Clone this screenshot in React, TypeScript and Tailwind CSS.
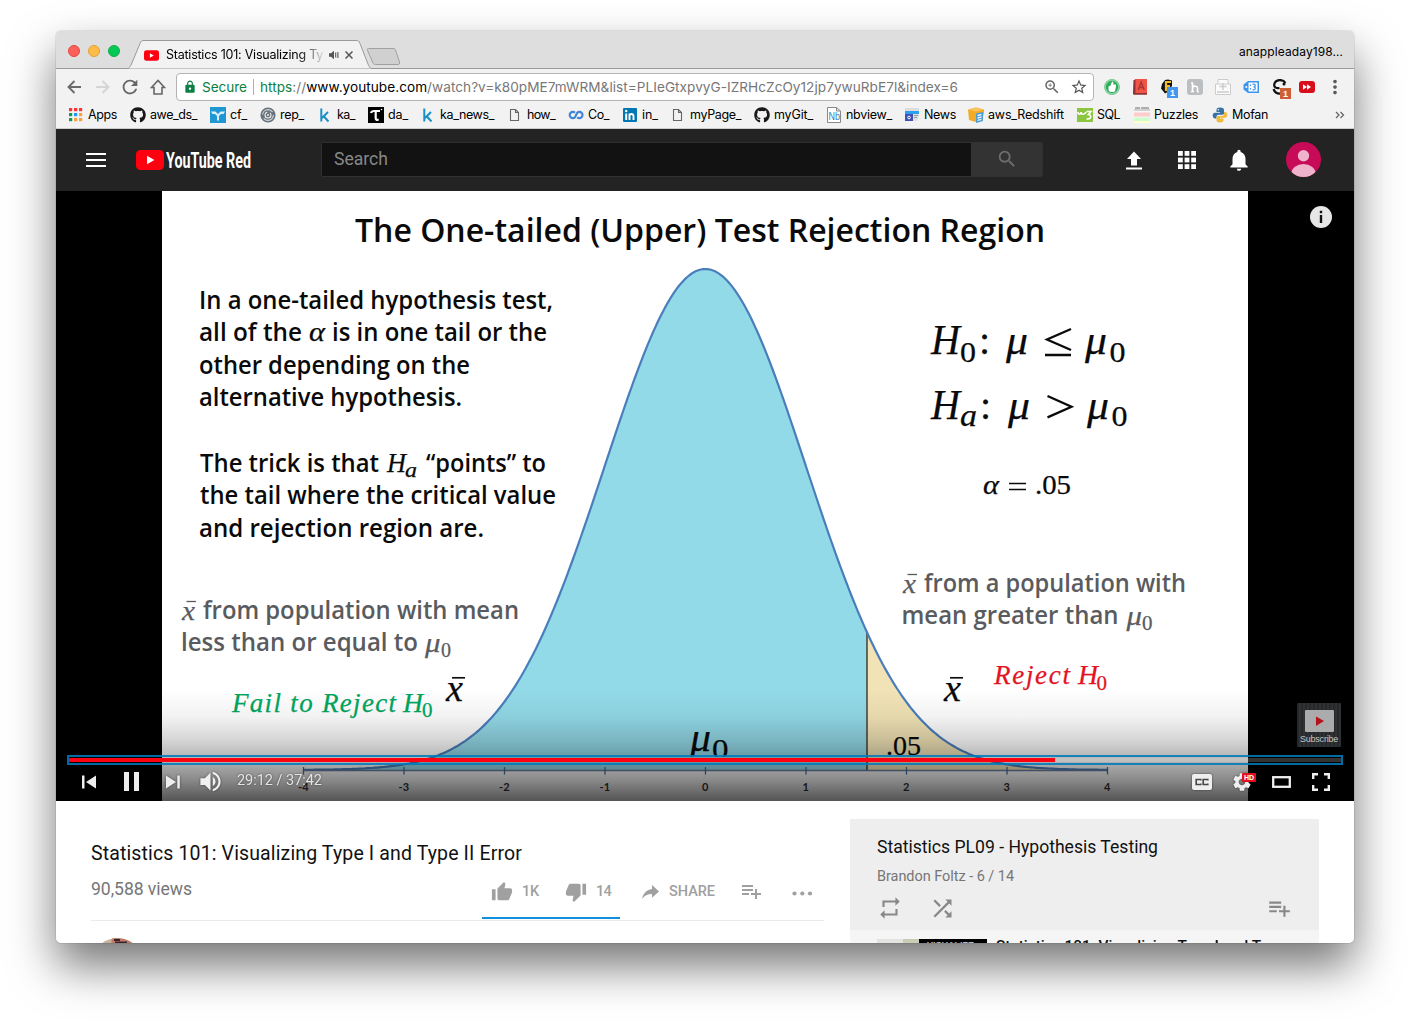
import React, { useLayoutEffect, useRef, useState } from 'react';
import {
  MdNotifications,
  MdSearch,
  MdThumbUp,
  MdThumbDown,
  MdPlaylistAdd,
  MdRepeat,
  MdShuffle,
  MdZoomIn,
  MdStarBorder,
  MdVolumeUp,
  MdSettings,
  MdLock,
  MdRefresh,
  MdMoreVert,
} from 'react-icons/md';
import { FaGithub } from 'react-icons/fa';

/* Text whose tracking is adjusted so that it fills a given width. */
function Fit({ w, className = '', children }: { w: number; className?: string; children: React.ReactNode }) {
  const ref = useRef<HTMLSpanElement>(null);
  const [ls, setLs] = useState(0);
  useLayoutEffect(() => {
    const el = ref.current;
    if (!el) return;
    const natural = el.getBoundingClientRect().width;
    const n = (el.textContent || ' ').length;
    setLs((w - natural) / n);
  }, [w]);
  return (
    <span ref={ref} className={`inline-block whitespace-nowrap ${className}`} style={{ letterSpacing: `${ls}px` }}>
      {children}
    </span>
  );
}

function PlayBadge({ className }: { className: string }) {
  return (
    <svg viewBox="0 0 28 20" className={className}>
      <rect width="28" height="20" rx="4.5" fill="#ff0010" />
      <path d="M11 5.7v8.6l7.4-4.3z" fill="#fff" />
    </svg>
  );
}

function TabStrip() {
  return (
    <div className="relative flex h-[38px] bg-[#dedede]">
      <div className="flex w-[72px] items-center gap-2 pl-3 pt-[2px]">
        <i className="size-3 rounded-full border border-[#e2463f] bg-[#fc605b]" />
        <i className="size-3 rounded-full border border-[#e1a22f] bg-[#fdbc4a]" />
        <i className="size-3 rounded-full border border-[#12ad45] bg-[#06c857]" />
      </div>
      <div className="relative w-[244px]">
        <svg viewBox="0 0 244 38" className="absolute inset-0 h-[38px] w-[244px]">
          <path d="M0 38C2 36 2.500 35 3.500 33L12 12.500C13 10 14 9.500 16 9.500H228C230 9.500 231 10 232 12.500L240 33C241 35.500 242 37 244 38z" fill="#f2f2f2" stroke="#999" />
        </svg>
        <div className="relative z-10 flex h-full items-center pt-[10px] pl-4">
          <PlayBadge className="mr-[7px] h-[11px] w-[15px]" />
          <Fit w={157} className="bg-linear-to-r from-black from-82% to-[#ddd] bg-clip-text font-['Inter'] text-[12.500px] text-transparent">
            Statistics 101: Visualizing Ty
          </Fit>
          <svg viewBox="0 0 10 10" className="ml-[6px] h-[10px] w-[10px]">
            <path d="M0 3.300h2L5 .8v8.400L2 6.700H0z" fill="#555" />
            <path d="M6.700 2.500v5M8.900 2v6" stroke="#555" strokeWidth="1.100" />
          </svg>
          <svg viewBox="0 0 8 8" className="ml-[6px] h-2 w-2">
            <path d="M.5.500l7 7M7.500.500l-7 7" stroke="#555" strokeWidth="1.500" />
          </svg>
        </div>
      </div>
      <svg viewBox="0 0 36 38" className="-ml-[6px] h-[38px] w-9">
        <path d="M2.500 17.500H27C28.500 17.500 29 18 29.500 19l4 12c.5 1.500 0 2.500-1.500 2.500H9.500C8 33.500 7.500 33 7 32L1.500 19.500c-.5-1.500 0-2 1-2z" fill="#d0d0d0" stroke="#a0a0a0" />
      </svg>
      <div className="flex flex-1 items-center justify-end pr-[11px] pt-[3px]">
        <Fit w={104} className="font-['Inter'] text-[12px] text-black">anappleaday198…</Fit>
      </div>
      <div className="absolute bottom-0 left-0 h-px w-[72px] bg-[#999]" />
      <div className="absolute bottom-0 left-[316px] right-0 h-px bg-[#999]" />
    </div>
  );
}

function Extensions() {
  return (
    <div className="ml-[10px] flex flex-1 items-center">
      <svg viewBox="0 0 16 16" className="mr-3 size-4">
        <circle cx="8" cy="8" r="7.700" fill="#2eab5b" />
        <circle cx="8" cy="8" r="6.900" fill="none" stroke="#8bd3a3" strokeWidth="1.500" />
        <path d="M4.500 7.500l2-1 1.500-4c1.500 0 1.600 1 1.200 3H12v2L11 12c-.5 1-1.500 1.200-3.500 1-2 0-3-1-3-2.500z" fill="#fff" />
      </svg>
      <svg viewBox="0 0 16 16" className="mr-3 size-4">
        <path d="M2 1.500L3 0h12v14.500H3L1.500 15z" fill="#ef5446" />
        <path d="M1.500 1h2v13h11.500v1.700H2C1 15.500 1 15 1 14z" fill="#8f3336" />
        <path d="M6.300 11L9.200 3l3 8M7.300 8.500h4" fill="none" stroke="#a83535" strokeWidth="1.400" />
      </svg>
      <svg viewBox="0 0 18 19" className="mr-[9px] mt-[3px] h-[19px] w-[18px]">
        <path d="M2 5l3-4 3-.5 4 1v5l-2 5-5 3-4-5z" fill="#111" />
        <path d="M6 12V3h5M6 7h4" fill="none" stroke="#f2bd2c" strokeWidth="2.200" />
        <rect x="7" y="8" width="11" height="11" fill="#4296ef" />
        <text x="12.500" y="17" textAnchor="middle" className="font-['Liberation_Sans'] text-[9px] font-bold" fill="#fff">1</text>
      </svg>
      <svg viewBox="0 0 16 16" className="mr-3 size-4">
        <rect width="16" height="16" rx="3" fill="#bcbfc1" />
        <path d="M5.500 13V3.500M4 12.500h3M4 4h1.500M5.500 8.200c1.500-1.500 5-1.500 5 .8v2.500c0 1 .4 1.500 1.300 1.200" fill="none" stroke="#fff" strokeWidth="1.600" />
      </svg>
      <svg viewBox="0 0 16 16" className="mr-3 size-4">
        <path d="M3 5V.5h10V5M.5 5h15v10.500H.500z" fill="#fbfbfb" stroke="#ccc" />
        <path d="M8 4v7M4.500 7.500h7M2 13h12" stroke="#ccc" strokeWidth="1.500" />
      </svg>
      <svg viewBox="0 0 16 16" className="mr-[13px] size-4">
        <path d="M5 2h11v12H5L.5 10.500v-5z" fill="#3c96ee" />
        <rect x="5.500" y="3.500" width="9" height="9" fill="#fff" />
        <path d="M7.500 5.500v1.500M7.500 9v1.500M9.500 5.200h1c2.500 0 2.500 2.600 0 2.700 2.500 0 2.500 2.900 0 2.900h-1" stroke="#3c96ee" strokeWidth="1.200" fill="none" />
        <circle cx="3.300" cy="8" r="1" fill="#fff" />
      </svg>
      <svg viewBox="0 0 19 20" className="mr-[8px] mt-[4px] h-5 w-[19px]">
        <path d="M13.500 4C11 0 4 0 2.500 4.500s3 5 5 4.500M1.500 10C3 14 6 15 9 14.500" fill="none" stroke="#111" strokeWidth="2.200" />
        <circle cx="12" cy="5" r="1.500" fill="#111" />
        <rect x="8" y="9" width="11" height="11" fill="#cc5f36" />
        <text x="13.500" y="18" textAnchor="middle" className="font-['Liberation_Sans'] text-[9px] font-bold" fill="#fff">1</text>
      </svg>
      <svg viewBox="0 0 16 14" className="h-[14px] w-4">
        <rect y="1" width="16" height="12" rx="3" fill="#d80f1b" />
        <path d="M4 4.300v5.400L8 7zM8 4.300v5.400L12 7z" fill="#fff" />
      </svg>
      <MdMoreVert className="ml-[9px] size-[22px] text-[#5a5a5a]" />
    </div>
  );
}

function Toolbar() {
  return (
    <div className="flex h-9 items-center bg-[#f2f2f2] pl-[11px]">
      <svg viewBox="0 0 14 14" className="size-[14px]"><path d="M14 7H1.500M7.500 1L1.500 7l6 6" fill="none" stroke="#6b6b6b" strokeWidth="1.900" /></svg>
      <svg viewBox="0 0 14 14" className="ml-[15px] size-[14px]"><path d="M0 7h12.500M6.500 1l6 6-6 6" fill="none" stroke="#d5d5d5" strokeWidth="1.900" /></svg>
      <MdRefresh className="ml-[9px] size-[22px] text-[#666]" />
      <svg viewBox="0 0 16 16" className="ml-[9px] size-4"><path d="M1.500 8.500L8 1.500l6.500 7H12V15H9.500H6.500H4V8.500z" fill="none" stroke="#666" strokeWidth="1.600" /></svg>
      <div className="ml-[10px] flex h-7 w-[918px] shrink-0 items-center rounded-[4px] border border-[#b4b4b4] bg-white pl-[6px]">
        <MdLock className="size-[14px] text-[#0b8043]" />
        <div className="-mt-[2px] ml-[5px] w-[51px] text-[#0b8043]">
          <Fit w={45} className="font-['Inter'] text-[13.600px]">Secure</Fit>
        </div>
        <div className="h-4 w-px bg-[#b0b0b0]" />
        <div className="-mt-[2px] ml-[6px] w-[783px]">
          <Fit w={698} className="font-['Inter'] text-[13.600px] text-[#777]">
            <span className="text-[#0b8043]">https</span>://<span className="text-black">www.youtube.com</span>/watch?v=k80pME7mWRM&amp;list=PLIeGtxpvyG-IZRHcZcOy12jp7ywuRbE7l&amp;index=6
          </Fit>
        </div>
        <MdZoomIn className="size-[18px] text-[#666]" />
        <MdStarBorder className="ml-[9px] size-[18px] text-[#555]" />
      </div>
      <Extensions />
    </div>
  );
}

const kGlyph = (
  <svg viewBox="0 0 16 16" className="size-4"><path d="M4.300 1.500v13M11 5L5 11M6.500 9l5 5.500" fill="none" stroke="#1b90c4" strokeWidth="2" /></svg>
);
const fileGlyph = (
  <svg viewBox="0 0 16 16" className="size-4"><path d="M3.500 2.500h5l3 3v8h-8zM8.500 2.500v3h3" fill="none" stroke="#666" strokeWidth="1.100" /></svg>
);
const dots = ['#f33', '#f33', '#f33', '#0a9d58', '#2196f3', '#f9a03a', '#0a9d58', '#f9a03a', '#f9a03a'];

const bookmarks: { cell: string; w: number; label: string; icon: React.ReactNode }[] = [
  {
    cell: 'w-[62px]', w: 29, label: 'Apps',
    icon: <svg viewBox="0 0 16 16" className="size-4">{dots.map((c, i) => <rect key={i} x={1 + (i % 3) * 5} y={1 + Math.floor(i / 3) * 5} width="3.200" height="3.200" fill={c} />)}</svg>,
  },
  { cell: 'w-[80px]', w: 47, label: 'awe_ds_', icon: <FaGithub className="size-4 text-[#191717]" /> },
  {
    cell: 'w-[50px]', w: 17, label: 'cf_',
    icon: <svg viewBox="0 0 16 16" className="size-4"><rect width="16" height="16" fill="#1f97d5" /><path d="M1 4.500h4.500L8 7l2.500-2.500H15L13.500 7H11L9 9v4.500H7V9L5 7H2.500z" fill="#d9f0fb" /></svg>,
  },
  {
    cell: 'w-[57px]', w: 24, label: 'rep_',
    icon: <svg viewBox="0 0 16 16" className="size-4"><circle cx="8" cy="8" r="7.600" fill="#68747d" /><circle cx="8" cy="8" r="5.400" fill="none" stroke="#d5dade" strokeWidth="1.100" strokeDasharray="13 4" /><circle cx="8" cy="8" r="3" fill="none" stroke="#eee" strokeWidth="1.100" strokeDasharray="13 3" /><circle cx="8" cy="8" r="1" fill="#eee" /></svg>,
  },
  { cell: 'w-[51px]', w: 18, label: 'ka_', icon: kGlyph },
  {
    cell: 'w-[52px]', w: 20, label: 'da_',
    icon: <svg viewBox="0 0 16 16" className="size-4"><rect width="16" height="16" /><path d="M3 6c.5-1.500 1.300-2 3-2h6M7.700 4v7c0 1.800 1 2.200 3 1.500" fill="none" stroke="#fff" strokeWidth="2.200" /><circle cx="13.500" cy="2.500" r=".8" fill="#fff" /></svg>,
  },
  { cell: 'w-[87px]', w: 54, label: 'ka_news_', icon: kGlyph },
  { cell: 'w-[61px]', w: 28, label: 'how_', icon: fileGlyph },
  {
    cell: 'w-[54px]', w: 21, label: 'Co_',
    icon: <svg viewBox="0 0 16 16" className="size-4"><path d="M7 5.800A3.100 3.100 0 1 0 7 10.200L9.200 5.800A3.100 3.100 0 1 1 9.200 10.200" fill="none" stroke="#3f86d8" strokeWidth="2.200" /></svg>,
  },
  {
    cell: 'w-[48px]', w: 16, label: 'in_',
    icon: <svg viewBox="0 0 16 16" className="size-4"><rect x="1" y="1" width="14" height="14" rx="1" fill="#0077b5" /><path d="M4.200 6.500V13M7.500 13V6.500M7.500 9c0-2.500 4-2.700 4 0v4" fill="none" stroke="#fff" strokeWidth="1.900" /><circle cx="4.200" cy="4" r="1.200" fill="#fff" /></svg>,
  },
  { cell: 'w-[84px]', w: 51, label: 'myPage_', icon: fileGlyph },
  { cell: 'w-[72px]', w: 39, label: 'myGit_', icon: <FaGithub className="size-4 text-[#191717]" /> },
  {
    cell: 'w-[78px]', w: 46, label: 'nbview_',
    icon: (
      <svg viewBox="0 0 16 16" className="size-4">
        <path d="M1.500.5h9l4 3.500v11.500h-13zM10.500.5V4h4" fill="#fff" stroke="#888" />
        <text x="2.500" y="13" textLength="11.500" lengthAdjust="spacingAndGlyphs" fill="#3b7fb5" className="font-['Liberation_Sans'] text-[10px]">Nb</text>
      </svg>
    ),
  },
  {
    cell: 'w-[64px]', w: 32, label: 'News',
    icon: <svg viewBox="0 0 16 16" className="size-4"><path d="M1 1h14v4H1z" fill="#dcdcdc" /><path d="M1 4h14v3H1z" fill="#2b9ff0" /><path d="M1 7h8v7H1z" fill="#3f51b5" /><path d="M9 7h6v3l-2 4H9z" fill="#e0e0e0" /><path d="M10 8.500h4M10 10.500h3" stroke="#999" /><circle cx="5" cy="10.500" r="1.300" fill="none" stroke="#fff" /></svg>,
  },
  {
    cell: 'w-[109px]', w: 76, label: 'aws_Redshift',
    icon: <svg viewBox="0 0 16 16" className="size-4"><path d="M0 2.500L8 .5l8 2V6L14 14l-6 1-7-2z" fill="#f2ab27" /><path d="M0 2.500l8 2 8-2L8 .5z" fill="#f8c45c" /><path d="M8 6.500l7-1.500v9l-7 2z" fill="#4b9bd1" /><path d="M9.500 8.500l4-1M9.500 11l4-1M9.500 13.300l4-1" stroke="#e6f3fb" strokeWidth="1.300" /></svg>,
  },
  {
    cell: 'w-[57px]', w: 23, label: 'SQL',
    icon: <svg viewBox="0 0 16 16" className="size-4"><rect y="1" width="16" height="14" fill="#8cc640" /><path d="M1 5c0 3 3 3 3 0 0 3 4 3 5 0M9.500 4.500H14l-2.500 3c3 0 3 4.500-.5 4.500H9.500" fill="none" stroke="#fff" strokeWidth="1.600" /></svg>,
  },
  {
    cell: 'w-[78px]', w: 44, label: 'Puzzles',
    icon: <svg viewBox="0 0 16 16" className="size-4"><rect width="16" height="16" fill="#f7f7f7" /><path d="M1 1h5M7 1h8" stroke="#666" strokeWidth="1.200" /><path d="M0 3h16" stroke="#aaa" /><rect y="5.500" width="16" height="4" fill="#fcc" /><rect y="10.500" width="16" height="3.500" fill="#cfc" /><rect y="14" width="16" height="2" fill="#ffc" /></svg>,
  },
  {
    cell: 'w-[60px]', w: 36, label: 'Mofan',
    icon: <svg viewBox="0 0 16 16" className="size-4"><path d="M8 .5c-3 0-3.500 1-3.500 2.500V5H8v.7H3C1.300 5.700.7 7 .7 8.500S1.500 11.500 3 11.500h1.500V9.800c0-1.300 1-2 2-2h4c1 0 1.500-.8 1.500-1.500V3C12 1.200 10.500.5 8 .5z" fill="#3672a5" /><path d="M8 15.500c3 0 3.500-1 3.500-2.500v-1.500H8v-.7h5c1.500 0 2.300-1.300 2.300-3S14.500 5 13 5h-1v2c0 1.300-1 2-2 2H6.500C5 9 4.500 9.800 4.500 10.500V13c0 1.800 1 2.500 3.500 2.500z" fill="#f0bb3a" /><circle cx="6.300" cy="2.700" r=".7" fill="#fff" /></svg>,
  },
];

function BookmarksBar() {
  return (
    <div className="flex h-6 items-center border-b border-[#c9cdce] bg-[#f2f2f2] pb-1 pl-3 pr-[9px]">
      {bookmarks.map((b) => (
        <div key={b.label} className={`flex shrink-0 items-center gap-1 ${b.cell}`}>
          {b.icon}
          <Fit w={b.w} className="font-['Inter'] text-[12.500px] leading-4 text-black">{b.label}</Fit>
        </div>
      ))}
      <svg viewBox="0 0 10 8" className="ml-auto h-2 w-[10px]"><path d="M1 1l3 3-3 3M5.500 1l3 3-3 3" fill="none" stroke="#666" strokeWidth="1.300" /></svg>
    </div>
  );
}

function Masthead() {
  return (
    <div className="flex h-[62px] items-center bg-[#232323] pl-[30px]">
      <div className="flex w-[20px] flex-col gap-[4px]">
        <i className="h-[2px] bg-white" />
        <i className="h-[2px] bg-white" />
        <i className="h-[2px] bg-white" />
      </div>
      <PlayBadge className="ml-[30px] h-5 w-7" />
      <svg viewBox="0 0 90 30" className="ml-[2px] h-[30px] w-[90px]">
        <text x="0" y="22.800" textLength="85" lengthAdjust="spacingAndGlyphs" fill="#fff" className="font-['Roboto'] text-[22px] font-bold">YouTube Red</text>
      </svg>
      <div className="-mt-[2px] ml-[65px] flex h-[35px] w-[722px] rounded-[2px] border border-[#303030]">
        <div className="flex w-[649px] items-center bg-[#121212] pl-3">
          <Fit w={54} className="font-['Roboto'] text-[17.600px] text-[#888]">Search</Fit>
        </div>
        <div className="flex flex-1 items-center justify-center bg-[#333]">
          <MdSearch className="size-[22px] text-[#6e6e6e]" />
        </div>
      </div>
      <svg viewBox="0 0 16 18" className="ml-[83px] h-[19px] w-4"><path d="M8 0l7 7.500h-4V14H5V7.500H1zM0 16h16v2H0z" fill="#fff" /></svg>
      <svg viewBox="0 0 18 18" className="ml-9 size-[18px]">
        {[0, 1, 2].map((r) => [0, 1, 2].map((c) => <rect key={`${r}${c}`} x={c * 6.600} y={r * 6.600} width="4.800" height="4.800" fill="#fff" />))}
      </svg>
      <MdNotifications className="ml-[30px] size-[26px] text-white" />
      <svg viewBox="0 0 35 35" className="-mt-px ml-[34px] size-[35px]">
        <clipPath id="avatar"><circle cx="17.500" cy="17.500" r="17.500" /></clipPath>
        <g clipPath="url(#avatar)">
          <rect width="35" height="35" fill="#c80b58" />
          <circle cx="17.500" cy="13.700" r="5.700" fill="#efb3cb" />
          <ellipse cx="17.500" cy="31" rx="12" ry="9" fill="#efb3cb" />
        </g>
      </svg>
    </div>
  );
}

/* Normal curve: z = 0 at x 705, one unit is 100.6 px, axis at y 770. */
const curveY = (x: number) => 770 - 501 * Math.exp(-0.5 * ((x - 705.3) / 100.6) ** 2);
const points = (from: number, to: number) => {
  const out: string[] = [];
  for (let x = from; x <= to; x += 2) out.push(`${x},${curveY(x).toFixed(1)}`);
  return out.join(' ');
};

type TextProps = { x: number; y: number; w?: number; s: number; f?: string; spread?: boolean; children: string };
const Sans = ({ x, y, w, s, f = '#0a0a0a', children }: TextProps) => (
  <text x={x} y={y} textLength={w} lengthAdjust="spacingAndGlyphs" fontSize={s} fill={f} className="font-['Open_Sans'] font-semibold">{children}</text>
);
const MathText = ({ x, y, w, s, f = '#0a0a0a', spread, children }: TextProps) => (
  <text x={x} y={y} textLength={w} lengthAdjust={spread ? 'spacing' : 'spacingAndGlyphs'} fontSize={s} fill={f} stroke={f} strokeWidth="0.25" className="font-['Liberation_Serif'] italic">{children}</text>
);
const Num = ({ x, y, w, s, f = '#0a0a0a', children }: TextProps) => (
  <text x={x} y={y} textLength={w} lengthAdjust="spacingAndGlyphs" fontSize={s} fill={f} stroke={f} strokeWidth="0.25" className="font-['Liberation_Serif']">{children}</text>
);
const gray = '#595b5e';

function Slide() {
  return (
    <svg viewBox="162 191 1086 610" className="h-[610px] w-[1086px] bg-white">
      <polygon points={`303,770 ${points(303, 867)} 867,770`} fill="#93dae8" />
      <polygon points={`867,770 ${points(867, 1107)} 1107,770`} fill="#f1e3b6" />
      <path d="M867 632V770" stroke="#4a4a3c" strokeWidth="1.600" />
      <polyline points={points(303, 1107)} fill="none" stroke="#4a7ebb" strokeWidth="2.200" />
      <path d="M303 770.500H1108" stroke="#6a7fa0" strokeWidth="1.400" />
      {[-4, -3, -2, -1, 0, 1, 2, 3, 4].map((n) => (
        <g key={n}>
          <path d={`M${705.500 + n * 100.500} 767v7.500`} stroke="#4a6c9c" strokeWidth="1.300" />
          <text x={705.300 + n * 100.500} y="791" textAnchor="middle" fontSize="11" fill="#333" className="font-['Lato'] font-bold">{n}</text>
        </g>
      ))}

      <Sans x={355} y={242} w={690} s={33}>The One-tailed (Upper) Test Rejection Region</Sans>
      <Sans x={199} y={308.500} w={354} s={25}>In a one-tailed hypothesis test,</Sans>
      <Sans x={199} y={341} w={103} s={25}>all of the</Sans>
      <MathText x={309} y={341} w={16} s={27}>α</MathText>
      <Sans x={332} y={341} w={215} s={25}>is in one tail or the</Sans>
      <Sans x={199} y={373.500} w={271} s={25}>other depending on the</Sans>
      <Sans x={199} y={406} w={263} s={25}>alternative hypothesis.</Sans>
      <Sans x={200} y={471.500} w={179} s={25}>The trick is that</Sans>
      <MathText x={387} y={471.500} w={19} s={28}>H</MathText>
      <MathText x={405} y={477} w={12} s={22}>a</MathText>
      <Sans x={426} y={471.500} w={120} s={25}>“points” to</Sans>
      <Sans x={200} y={504} w={356} s={25}>the tail where the critical value</Sans>
      <Sans x={199} y={536.500} w={285} s={25}>and rejection region are.</Sans>

      <MathText x={182} y={619.500} w={13} s={27} f={gray}>x</MathText>
      <path d="M186.500 601.500h9.500" stroke={gray} strokeWidth="1.300" />
      <Sans x={203} y={619} w={316} s={25} f={gray}>from population with mean</Sans>
      <Sans x={181} y={651} w={237} s={25} f={gray}>less than or equal to</Sans>
      <MathText x={425} y={651.500} w={15.500} s={27} f={gray}>μ</MathText>
      <Num x={441} y={657} w={10} s={20.500} f={gray}>0</Num>

      <MathText x={232} y={711.500} w={164} s={27} spread f="#00a65e">Fail to Reject</MathText>
      <MathText x={403} y={711.500} w={20} s={28} f="#00a65e">H</MathText>
      <Num x={422} y={717} w={10.500} s={21.500} f="#00a65e">0</Num>
      <MathText x={446} y={700.500} w={17} s={37}>x</MathText>
      <path d="M452 677.800h13" stroke="#111" strokeWidth="1.700" />

      <g clipPath="url(#aboveBar)">
        <clipPath id="aboveBar"><rect x="600" y="600" width="400" height="157" /></clipPath>
        <MathText x={690} y={750.500} w={21} s={42}>μ</MathText>
        <Num x={712} y={759} w={16.500} s={30}>0</Num>
        <Num x={886} y={754.500} w={35} s={27}>.05</Num>
      </g>

      <MathText x={931} y={354} w={29} s={43}>H</MathText>
      <Num x={960} y={362} w={16} s={30}>0</Num>
      <Num x={979} y={354} s={40}>:</Num>
      <MathText x={1006} y={354} w={22} s={43}>μ</MathText>
      <path d="M1071 329l-24 10.500 24 10.500M1045 355h26" fill="none" stroke="#0a0a0a" strokeWidth="2.300" />
      <MathText x={1085} y={354} w={22} s={43}>μ</MathText>
      <Num x={1109.500} y={362} w={16} s={30}>0</Num>

      <MathText x={931} y={418.500} w={29} s={43}>H</MathText>
      <MathText x={960} y={426} w={17} s={32}>a</MathText>
      <Num x={980} y={418.500} s={40}>:</Num>
      <MathText x={1008} y={418.500} w={22} s={43}>μ</MathText>
      <path d="M1047.500 396l24 10.700-24 10.700" fill="none" stroke="#0a0a0a" strokeWidth="2.300" />
      <MathText x={1087} y={418.500} w={22} s={43}>μ</MathText>
      <Num x={1111.500} y={426} w={16} s={30}>0</Num>

      <MathText x={983} y={494} w={16} s={28}>α</MathText>
      <path d="M1009 483.500h17M1009 489.500h17" stroke="#0a0a0a" strokeWidth="1.700" />
      <Num x={1035} y={494} w={36} s={27}>.05</Num>

      <MathText x={903} y={592.500} w={13} s={27} f={gray}>x</MathText>
      <path d="M907.500 574.500h9.500" stroke={gray} strokeWidth="1.300" />
      <Sans x={924} y={592} w={262} s={25} f={gray}>from a population with</Sans>
      <Sans x={901.500} y={624} w={217} s={25} f={gray}>mean greater than</Sans>
      <MathText x={1126.500} y={624.500} w={15.500} s={27} f={gray}>μ</MathText>
      <Num x={1142} y={630} w={10.500} s={20.500} f={gray}>0</Num>
      <MathText x={944} y={700.500} w={17} s={37}>x</MathText>
      <path d="M950 677.800h13" stroke="#111" strokeWidth="1.700" />
      <MathText x={994} y={684} w={76} s={27} spread f="#e3141f">Reject</MathText>
      <MathText x={1078} y={684} w={20} s={28} f="#e3141f">H</MathText>
      <Num x={1096.500} y={689.500} w={10.500} s={21.500} f="#e3141f">0</Num>
    </svg>
  );
}

function Player() {
  return (
    <div className="relative flex h-[610px] justify-center bg-black">
      <Slide />
      <div className="absolute inset-x-0 bottom-0 flex h-[112px] flex-col bg-[linear-gradient(to_bottom,rgba(0,0,0,0)_0%,rgba(0,0,0,0.05)_25%,rgba(0,0,0,0.16)_45%,rgba(0,0,0,0.31)_64%,rgba(0,0,0,0.46)_81%,rgba(0,0,0,0.67)_100%)] px-[11px] pt-[66px]">
        <div className="flex h-[10px] items-center border-2 border-[rgba(0,122,190,0.87)]">
          <div className="h-[4px] w-[986px] bg-[#ff0012]" />
          <div className="h-[4px] w-[43px] bg-[#c4c4c4]/80" />
          <div className="h-[4px] flex-1 bg-white/20" />
        </div>
        <div className="flex h-[33px] items-center pl-[15px] drop-shadow-[0_0_1px_rgba(0,0,0,0.5)]">
          <svg viewBox="0 0 14 14" className="size-[14px]"><path d="M0 .5h2.500v13H0zM14 .5v13L4 7z" fill="#eee" /></svg>
          <svg viewBox="0 0 16 19" className="ml-7 h-[19px] w-4"><path d="M0 0h5v19H0zM10 0h5v19h-5z" fill="#eee" /></svg>
          <svg viewBox="0 0 14 14" className="ml-[26px] size-[14px]"><path d="M0 .5v13L10 7zM11.300.500h2.500v13h-2.500z" fill="#eee" /></svg>
          <MdVolumeUp className="ml-[17px] size-[27px] text-[#f0f0f0]" />
          <div className="-mt-[4px] ml-[13px] w-[955px]">
            <Fit w={85} className="font-['Roboto'] text-[14.500px] text-[#e4e4e4]">29:12 / 37:42</Fit>
          </div>
          <svg viewBox="0 0 20 16" className="h-4 w-5 shrink-0">
            <rect width="20" height="16" rx="2" fill="#eee" />
            <path d="M8.800 6.500V5.500H4.200v5h4.600v-1M15.800 6.500V5.500h-4.600v5h4.600v-1" fill="none" stroke="#444" strokeWidth="1.600" />
          </svg>
          <div className="relative ml-[19px] shrink-0">
            <MdSettings className="size-[22px] text-[#eee]" />
            <span className="absolute left-[11px] top-[2px] h-[9px] w-[14px] rounded-[1px] bg-[#e60f1e] text-center font-['Liberation_Sans'] text-[7px] font-bold leading-[9px] text-white">HD</span>
          </div>
          <svg viewBox="0 0 19 12" className="ml-[19px] h-3 w-[19px] shrink-0"><rect x="1.200" y="1.200" width="16.600" height="9.600" fill="none" stroke="#eee" strokeWidth="2.300" /></svg>
          <svg viewBox="0 0 18 18" className="ml-[21px] size-[18px] shrink-0"><path d="M1.200 6V1.200H6M12 1.200h4.800V6M16.800 12v4.800H12M6 16.800H1.200V12" fill="none" stroke="#eee" strokeWidth="2.400" /></svg>
        </div>
      </div>
      <svg viewBox="0 0 22 22" className="absolute right-[22px] top-[15px] size-[22px]">
        <circle cx="11" cy="11" r="11" fill="#e6e6e6" />
        <path d="M9.800 4.800h2.400v2.400H9.800zM9.800 9h2.400v8H9.800z" fill="#111" />
      </svg>
      <div className="absolute bottom-[54px] right-[13px] flex h-[44px] w-[44px] flex-col items-center rounded-[1px] bg-[repeating-linear-gradient(90deg,#26282a_0_2px,#2f3234_2px_4px)] pt-[7px]">
        <svg viewBox="0 0 29 22" className="h-[22px] w-[29px]"><rect width="29" height="22" rx="1" fill="#ababab" /><path d="M11 6.500l8 4.500-8 5z" fill="#b3121d" /></svg>
        <Fit w={38} className="mt-[2px] font-['Liberation_Sans'] text-[9px] leading-[11px] text-[#c4c4c4]">Subscribe</Fit>
      </div>
    </div>
  );
}

function VideoInfo() {
  return (
    <div className="ml-[35px] w-[733px] overflow-hidden">
      <div className="mt-[41px] h-6 leading-6">
        <Fit w={431} className="font-['Roboto'] text-[19.500px] text-[#111]">Statistics 101: Visualizing Type I and Type II Error</Fit>
      </div>
      <div className="flex h-[55px] justify-between border-b border-[#ebebeb]">
        <div className="pt-[11px] leading-6">
          <Fit w={101} className="font-['Roboto'] text-[17.600px] text-[#767676]">90,588 views</Fit>
        </div>
        <div className="flex font-['Roboto'] text-[14.500px] font-medium text-[#a0a0a0]">
          <div className="flex h-[53px] w-[138px] items-center border-b-2 border-[#128fdc] pl-[9px]">
            <MdThumbUp className="size-[22px]" />
            <Fit w={17} className="ml-[9px]">1K</Fit>
            <MdThumbDown className="ml-[26px] size-[22px]" />
            <Fit w={15} className="ml-[9px]">14</Fit>
          </div>
          <div className="ml-[22px] flex h-[51px] items-center">
            <svg viewBox="0 0 17 14" className="h-[14px] w-[17px]"><path d="M10 0l7 6.500-7 6.300V9C5.500 9 2.500 10.500 0 14c1-5 4-9 10-10z" fill="#a0a0a0" /></svg>
            <Fit w={46} className="ml-[10px]">SHARE</Fit>
            <MdPlaylistAdd className="-mt-px ml-[24px] size-[24px]" />
            <svg viewBox="0 0 21 5" className="ml-[29px] mr-[11px] mt-[3px] h-[5px] w-[21px]"><circle cx="2.500" cy="2.500" r="2.100" fill="#a0a0a0" /><circle cx="10.300" cy="2.500" r="2.100" fill="#a0a0a0" /><circle cx="18" cy="2.500" r="2.100" fill="#a0a0a0" /></svg>
          </div>
        </div>
      </div>
      <svg viewBox="0 0 53 53" className="mt-[16px] h-[53px] w-[53px]">
        <clipPath id="channel"><circle cx="26.500" cy="27" r="26" /></clipPath>
        <g clipPath="url(#channel)">
          <rect width="53" height="53" fill="#c9b39c" />
          <path d="M21 0c2 2 15-1 22 8H20z" fill="#c07a68" />
          <path d="M23 3h6M24 5.500h12" stroke="#3a2226" strokeWidth="2" />
        </g>
      </svg>
    </div>
  );
}

function PlaylistPanel() {
  return (
    <div className="ml-[26px] mt-[18px] w-[469px] overflow-hidden">
      <div className="h-[111px] bg-[#eeeeee] px-[27px] pt-[18px]">
        <div className="h-[21px] leading-[21px]">
          <Fit w={281} className="font-['Roboto'] text-[17.600px] text-[#111]">Statistics PL09 - Hypothesis Testing</Fit>
        </div>
        <div className="mt-[7px] h-5 leading-5">
          <Fit w={137} className="font-['Roboto'] text-[14.500px] text-[#767676]">Brandon Foltz - 6 / 14</Fit>
        </div>
        <div className="mt-[10px] flex text-[#888]">
          <MdRepeat className="size-[26px]" />
          <MdShuffle className="ml-[26px] size-[27px]" />
          <MdPlaylistAdd className="ml-auto size-[26px]" />
        </div>
      </div>
      <div className="flex h-[80px] bg-[#f5f5f5] pl-[27px] pt-[9px]">
        <div className="flex h-[62px] w-[110px] bg-black">
          <div className="w-[26px] bg-[#e4e4e2]" />
          <div className="w-4 bg-[#c9cdb4]" />
          <div className="pl-2 pt-px font-['Liberation_Sans'] text-[9px] font-bold leading-[10px] text-[#bbb]">VISUALIZE</div>
        </div>
        <Fit w={272} className="-mt-[3px] ml-[9px] h-5 font-['Roboto'] text-[15.400px] font-medium leading-5 text-[#111]">Statistics 101: Visualizing Type I and Ty</Fit>
      </div>
    </div>
  );
}

export default function App() {
  return (
    <div className="h-[1023px] w-[1410px] overflow-hidden bg-white pl-[56px] pt-[31px]">
      <div className="h-[912px] w-[1298px] rounded-[5px] shadow-[0_0_1px_rgba(0,0,0,0.7),0_23px_46px_rgba(0,0,0,0.54)]">
        <div className="flex h-[912px] flex-col overflow-hidden rounded-[5px] bg-white">
          <TabStrip />
          <Toolbar />
          <BookmarksBar />
          <Masthead />
          <Player />
          <div className="flex h-[142px] shrink-0 overflow-hidden">
            <VideoInfo />
            <PlaylistPanel />
          </div>
        </div>
      </div>
    </div>
  );
}
